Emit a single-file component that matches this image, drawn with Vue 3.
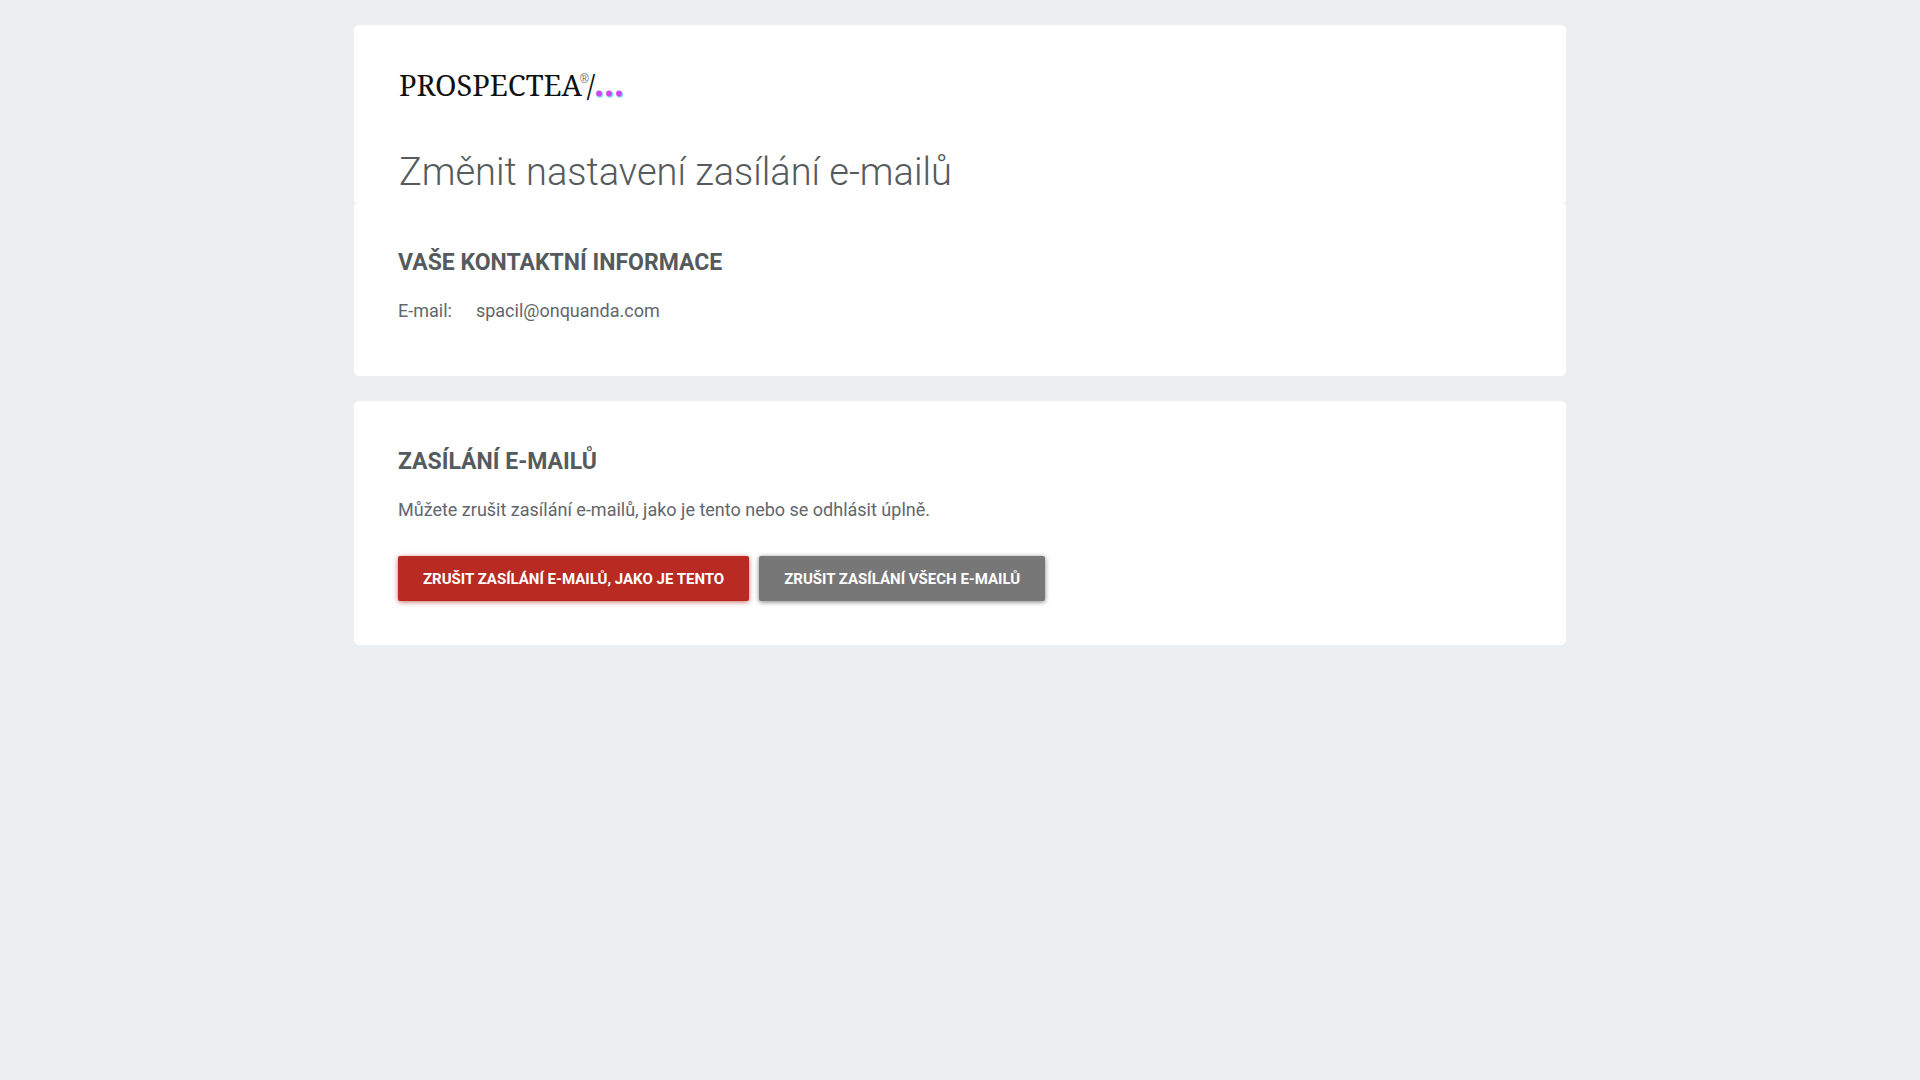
<script setup>
const email = 'spacil@onquanda.com'
</script>

<template>
  <main class="page">
    <header class="card head">
      <div class="logo">
        <span>PROSPECTEA</span><sup class="reg">®</sup><span>/</span>
        <svg class="dots" width="28" height="9" viewBox="0 0 28 9" aria-hidden="true">
          <g fill="#7fdcfb"><circle cx="5" cy="5.5" r="3.2" /><circle cx="15" cy="5.5" r="3.2" /><circle cx="25" cy="5.5" r="3.2" /></g>
          <g fill="#cf45ef"><circle cx="4" cy="4.5" r="2.9" /><circle cx="14" cy="4.5" r="2.9" /><circle cx="24" cy="4.5" r="2.9" /></g>
        </svg>
      </div>
      <h1>Změnit nastavení zasílání e-mailů</h1>
    </header>
    <section class="card contact">
      <h2>Vaše kontaktní informace</h2>
      <dl class="info">
        <dt>E-mail:</dt>
        <dd>{{ email }}</dd>
      </dl>
    </section>
    <section class="card mailing">
      <h2>Zasílání e-mailů</h2>
      <p>Můžete zrušit zasílání e-mailů, jako je tento nebo se odhlásit úplně.</p>
      <div class="actions">
        <button type="button" class="danger">Zrušit zasílání e-mailů, jako je tento</button>
        <button type="button" class="neutral">Zrušit zasílání všech e-mailů</button>
      </div>
    </section>
  </main>
</template>

<style>
body {
  margin: 0;
  background: #ebeff2;
}
</style>

<style scoped>
.page {
  max-width: 1212px;
  margin: 0 auto;
  padding: 25px 16px;
  font-family: Roboto, sans-serif;
  font-size: 18px;
  line-height: 24px;
  color: #62666d;
}
.card {
  background: #fff;
  border-radius: 5px;
  padding: 45px 44px 44px;
}
.head {
  padding: 44px 45px 5px;
  border-radius: 5px 5px 0 0;
}
.logo {
  display: flex;
  align-items: center;
  height: 32px;
  font-family: "Noto Serif", "Liberation Serif", serif;
  font-size: 29px;
  color: #111;
}
.reg {
  align-self: flex-start;
  margin: 0 -2px;
  font-family: "Liberation Sans", sans-serif;
  font-size: 12px;
  line-height: 20px;
  color: #666;
}
.dots {
  margin-top: 16px;
}
h1 {
  margin: 46px 0 0;
  font-size: 38px;
  line-height: 50px;
  font-weight: 300;
  color: #555a5c;
}
h2 {
  margin: 0;
  font-size: 23px;
  line-height: 32px;
  font-weight: 700;
  text-transform: uppercase;
  color: #555a5c;
}
.contact {
  padding-bottom: 53px;
}
.info {
  display: flex;
  gap: 24px;
  margin: 20px 0 0;
}
.info dd {
  margin: 0;
}
.mailing {
  margin-top: 25px;
}
p {
  margin: 20px 0 0;
}
.actions {
  display: flex;
  gap: 10px;
  margin-top: 34px;
}
button {
  height: 45px;
  padding: 0 25px;
  border: 0;
  border-radius: 2px;
  font: 700 15px/20px Roboto, sans-serif;
  text-transform: uppercase;
  color: #fff;
}
.danger {
  background: #b92a23;
  box-shadow: 0 1px 5px rgba(185, 42, 35, 0.7);
}
.neutral {
  background: #777;
  box-shadow: 0 1px 5px rgba(0, 0, 0, 0.5);
}
</style>
